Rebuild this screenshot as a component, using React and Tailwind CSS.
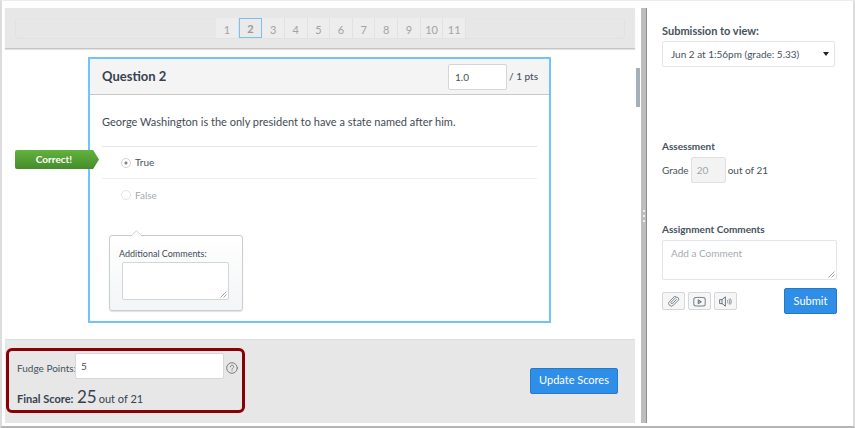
import { useState } from 'react';

const questions = [1, 2, 3, 4, 5, 6, 7, 8, 9, 10, 11];

const ResizeGrip = () => (
  <svg className="absolute right-[2px] bottom-[2px] size-[7px] pointer-events-none" viewBox="0 0 7 7" stroke="#8a8f94" strokeWidth="0.8" fill="none">
    <path d="M0.5 6.5L6.5 0.5M3.5 6.5L6.5 3.5" />
  </svg>
);

const PaperclipIcon = () => (
  <svg className="size-3" viewBox="0 0 24 24" fill="none" stroke="#65717b" strokeWidth="1.7" strokeLinecap="round" strokeLinejoin="round">
    <path d="M16.8 9.2l-7.6 7.6a1.9 1.9 0 0 1-2.7-2.7l8.6-8.6a3.7 3.7 0 0 1 5.3 5.3l-9.8 9.8a5.4 5.4 0 0 1-7.7-7.7l9.2-9.2a3.5 3.5 0 0 1 3-1" />
  </svg>
);

const MediaIcon = () => (
  <svg className="size-[13px]" viewBox="0 0 13 13" fill="none" stroke="#5f6b75" strokeWidth="0.9" strokeLinejoin="round">
    <path d="M1 3C2.6 2.2 10.4 2.2 12 3C12.3 5 12.3 8.6 12 10.6C10.4 11.2 2.6 11.2 1 10.6C0.7 8.6 0.7 5 1 3Z" />
    <path d="M5.2 4.8L8.4 6.8L5.2 8.8Z" fill="#aab0b5" />
  </svg>
);

const AudioIcon = () => (
  <svg className="size-[13px]" viewBox="0 0 13 13" fill="none" stroke="#5f6b75" strokeWidth="0.9" strokeLinecap="round" strokeLinejoin="round">
    <path d="M1 4.6H3L6.4 1.8V11.2L3 8.6H1Z" />
    <path d="M3 4.6V8.6" />
    <path d="M8.4 5.2C9 6 9 7.2 8.4 8M10 4.2C11 5.6 11 7.6 10 9M11.4 3.8C12.6 5.6 12.6 7.6 11.4 9.4" strokeWidth="0.7" />
  </svg>
);

const HelpIcon = () => (
  <svg className="size-3 shrink-0" viewBox="0 0 12 12" fill="none" stroke="#6d747b" strokeWidth="0.9" strokeLinecap="round">
    <circle cx="6" cy="6" r="5.3" />
    <path d="M4.3 4.8C4.3 2.6 7.7 2.7 7.7 4.7C7.7 5.9 6 5.9 6 7.2M6 8.8V9" />
  </svg>
);

const QuestionNav = ({ current, onSelect }) => (
  <nav className="border-b border-[#c4c4c4] bg-[#e7e7e7] px-[10px] pt-[10px] pb-[9px] shadow-[0_1px_1px_#e4e4e4]">
    <div className="flex h-[21px] justify-center rounded-sm border border-[#e2e2e2] border-t-[#e5e5e5] pl-[42px]">
      <div className="-my-px flex h-5 w-[250px]">
        {questions.map((n) => (
          <button
            key={n}
            type="button"
            onClick={() => onSelect(n)}
            className={
              n === current
                ? 'flex-1 border border-[#79c0f3] bg-[#eaeaea] pt-[2px] text-[11px] leading-4 font-bold text-[#999]'
                : 'flex-1 border-r border-[#e2e2e2] bg-[#ededed] pt-[3px] text-[11px] leading-4 text-[#a3a3a3]'
            }
          >
            {n}
          </button>
        ))}
      </div>
    </div>
  </nav>
);

const Question = () => {
  const [answer, setAnswer] = useState('true');

  return (
    <section className="relative mr-[84px] ml-[83px] mt-2 h-[266px] border-2 border-[#72c3fb]">
      <header className="flex h-9 items-center border-b border-[#c9c9c9] bg-[#f4f4f4] pr-[11px] pl-3">
        <h2 className="flex-1 text-[13px] font-bold text-[#35424f]">Question 2</h2>
        <input
          aria-label="Points"
          defaultValue="1.0"
          className="h-[26px] w-[59px] rounded-[2px] border border-[#d3d5d7] bg-white px-1.5 text-[10px] text-[#45515c]"
        />
        <span className="ml-[2px] pb-px text-[10px] font-medium text-[#45515c]">/ 1 pts</span>
      </header>

      <div className="px-3 pt-[19px]">
        <p className="text-[11px] leading-4 text-[#3f4b56]">
          George Washington is the only president to have a state named after him.
        </p>

        <div className="relative mt-4 border-t border-[#e6e6e6]">
          <div className="absolute top-[3px] -left-[87px] flex h-[19px] w-[84px] items-center justify-center rounded-l-xs bg-linear-to-b from-[#62b33e] to-[#468c2b] pr-1.5 text-[10px] font-bold text-white [clip-path:polygon(0_0,93%_0,100%_50%,93%_100%,0_100%)]">
            Correct!
          </div>
          <label className="flex h-8 items-center gap-1 border-b border-[#eee] pl-[19px] text-[10px] text-[#4a545e]">
            <input
              type="radio"
              name="answer"
              checked={answer === 'true'}
              onChange={() => setAnswer('true')}
              className="size-[10px] appearance-none rounded-full border border-[#d2d2d2] bg-white checked:bg-[radial-gradient(circle,#888_1px,white_2px)]"
            />
            True
          </label>
          <label className="flex h-8 items-center gap-1 pl-[19px] text-[10px] text-[#a5a9ad]">
            <input
              type="radio"
              name="answer"
              checked={answer === 'false'}
              onChange={() => setAnswer('false')}
              className="size-[10px] appearance-none rounded-full border border-[#e3e3e3] bg-white checked:bg-[radial-gradient(circle,#888_1px,white_2px)]"
            />
            False
          </label>
        </div>

        <div className="relative mt-6 ml-[7px] h-[76px] w-[134px] rounded-[3px] border border-[#c8cdd2] bg-linear-to-b from-white to-[#f3f5f6] px-[9px] pt-[10px] shadow-[0_1px_1px_#dfe2e4]">
          <svg className="absolute -top-[6px] left-[20px] h-[7px] w-[13px]" viewBox="0 0 13 7" fill="white" stroke="#c8cdd2">
            <path d="M0.5 6.5L6.5 0.8L12.5 6.5" />
          </svg>
          <label htmlFor="additional" className="block text-[9px] leading-4 text-[#3f4b56]">Additional Comments:</label>
          <div className="relative ml-[3px] w-[107px]">
            <textarea id="additional" className="block h-[38px] w-full resize-none rounded-[2px] border border-[#d3d5d7] bg-white p-1 text-[10px]" />
            <ResizeGrip />
          </div>
        </div>
      </div>
    </section>
  );
};

const ScoreBar = () => (
  <footer className="flex items-center justify-between border-t border-[#dedede] bg-[#e7e7e7] pt-2 pr-[17px] pb-[10px] pl-px text-[#45515c]">
    <div className="h-[65px] w-[239px] rounded-md border-3 border-[#8b0007] px-2 pt-[2px]">
      <div className="flex items-center">
        <label htmlFor="fudge" className="w-[58px] shrink-0 pt-1 text-[10px] whitespace-nowrap">Fudge Points:</label>
        <input
          id="fudge"
          defaultValue="5"
          className="h-[26px] w-[149px] shrink-0 rounded-[2px] border border-[#d5d7d9] bg-white px-[5px] text-[10px]"
        />
        <span className="ml-[2px] pt-1"><HelpIcon /></span>
      </div>
      <p className="mt-2 flex items-baseline text-[11px] leading-5 whitespace-nowrap text-[#35424f]">
        <b className="w-[60px]">Final Score:</b>
        <span className="mr-[2px] text-[17px]">25</span>
        out of 21
      </p>
    </div>
    <button type="button" className="h-[26px] w-[88px] rounded-[2px] border border-[#2879c4] bg-[#2f8ee8] text-[11px] text-white">
      Update Scores
    </button>
  </footer>
);

const mediaButtons = [
  { label: 'Attach file', Icon: PaperclipIcon },
  { label: 'Record video', Icon: MediaIcon },
  { label: 'Record audio', Icon: AudioIcon },
];

const Sidebar = () => (
  <aside className="w-[206px] shrink-0 px-[15px] pt-[15px] text-[10px] text-[#45515c]">
    <label htmlFor="submission" className="block text-[11px] leading-4 font-bold">Submission to view:</label>
    <div className="relative mt-[2px] w-[173px]">
      <select id="submission" className="h-[26px] w-full appearance-none rounded-[2px] border border-[#e2e6ea] bg-white px-2 text-[10px]">
        <option>Jun 2 at 1:56pm (grade: 5.33)</option>
      </select>
      <svg className="pointer-events-none absolute top-[11px] right-[6px] h-1 w-[6px]" viewBox="0 0 6 4" fill="#222">
        <path d="M0 0H6L3 4Z" />
      </svg>
    </div>

    <h3 className="mt-[71px] text-[10px] leading-4 font-bold">Assessment</h3>
    <div className="mt-[3px] flex items-center gap-[2px]">
      <label htmlFor="grade">Grade</label>
      <input
        id="grade"
        defaultValue="20"
        disabled
        className="h-[26px] w-[35px] rounded-[2px] border border-[#e0e0e0] bg-[#f3f3f3] px-[5px] text-[10px] text-[#a0a4a8]"
      />
      <span>out of 21</span>
    </div>

    <label htmlFor="comment" className="mt-[38px] block text-[10px] leading-4 font-bold">Assignment Comments</label>
    <div className="relative mt-[3px] w-[175px]">
      <textarea
        id="comment"
        placeholder="Add a Comment"
        className="block h-10 w-full resize-none rounded-[2px] border border-[#e2e6ea] bg-white px-2 py-1 text-[10px] leading-4 placeholder:text-[#a6abaf]"
      />
      <ResizeGrip />
    </div>

    <div className="mt-2 flex w-[175px] items-center gap-[3px]">
      {mediaButtons.map(({ label, Icon }) => (
        <button
          key={label}
          type="button"
          aria-label={label}
          className="flex h-[18px] w-[23px] items-center justify-center rounded-[2px] border border-[#d4d6d8] bg-[#f6f6f6]"
        >
          <Icon />
        </button>
      ))}
      <button type="button" className="ml-auto h-[26px] w-[53px] rounded-[2px] border border-[#2879c4] bg-[#2f8ee8] text-[11px] text-white">
        Submit
      </button>
    </div>
  </aside>
);

const App = () => {
  const [current, setCurrent] = useState(2);

  return (
    <div className="min-h-screen bg-white font-['Lato',sans-serif]">
      <div className="flex border-t border-r-2 border-b-2 border-l-2 border-t-[#ededed] border-r-[#dcdcdc] border-b-[#b5b5b5] border-l-[#dcdcdc] pt-[7px] pb-[3px] pl-[3px]">
        <main className="min-w-0 flex-1">
          <QuestionNav current={current} onSelect={setCurrent} />
          <div className="pb-4">
            <Question />
          </div>
          <ScoreBar />
        </main>
        <div className="mx-px mt-[60px] h-[39px] w-1 bg-[#a5b0b8]" />
        <div className="flex w-[6px] items-center justify-center border-r border-[#8f8f8f] bg-[#bdbdbd]">
          <span className="flex flex-col gap-[3px]">
            <i className="size-[2px] bg-[#e9effb]" />
            <i className="size-[2px] bg-[#e9effb]" />
            <i className="size-[2px] bg-[#e9effb]" />
          </span>
        </div>
        <Sidebar />
      </div>
    </div>
  );
};

export default App;
